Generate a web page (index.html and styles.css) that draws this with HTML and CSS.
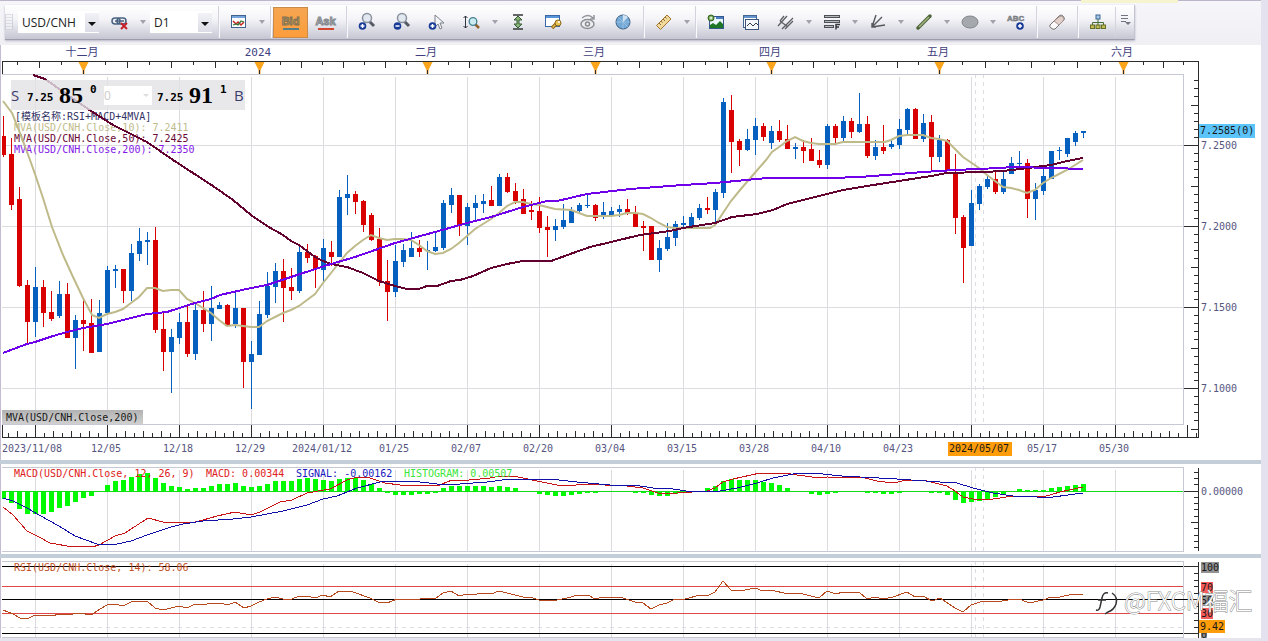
FILE: index.html
```html
<!DOCTYPE html>
<html lang="zh-CN">
<head>
<meta charset="utf-8">
<meta name="viewport" content="width=device-width, initial-scale=1">
<title>USD/CNH D1</title>
<link rel="stylesheet" href="styles.css">
</head>
<body>
<div class="frame">
  <header class="header">
    <div class="tab-hint"></div>
    <div class="toolbar" role="toolbar" aria-label="图表工具">
      <span class="grip"></span>
      <span class="combo combo-symbol"><select aria-label="品种"><option>USD/CNH</option></select></span>
      <button class="tool" aria-label="取消链接"><svg width="20" height="20" viewBox="0 0 20 20"><g fill="none" stroke="#47617f" stroke-width="1.5"><rect x="2" y="6" width="8" height="6" rx="3"/><rect x="7" y="6" width="9" height="6" rx="3"/><path d="M5 9h9"/></g><path d="M11 11l6 6M17 11l-6 6" stroke="#c8202a" stroke-width="2"/></svg></button>
      <button class="drop" aria-label="更多链接"></button>
      <span class="combo combo-period"><select aria-label="周期"><option>D1</option></select></span>
      <span class="sep"></span>
      <button class="tool" aria-label="图表类型"><svg width="20" height="20" viewBox="0 0 20 20"><rect x="2.500" y="3.500" width="14" height="12" fill="#fff" stroke="#41618f"/><path d="M3 5h13" stroke="#75a5dc" stroke-width="2"/><path d="M4 9l3 3 2-2 3 3 3-3" fill="none" stroke="#c22" stroke-width="1.500"/><path d="M4 13l3-1 2 1 3-4 3 1" fill="none" stroke="#357b38" stroke-width="1.300"/></svg></button>
      <button class="drop" aria-label="更多图表类型"></button>
      <span class="sep"></span>
      <button class="tool price bid" aria-pressed="true">Bid</button>
      <button class="tool price ask">Ask</button>
      <span class="sep"></span>
      <button class="tool" aria-label="放大"><svg width="20" height="20" viewBox="0 0 20 20"><path d="M12 9l5 5" stroke="#555b64" stroke-width="3"/><circle cx="10" cy="6" r="4.500" fill="#e2e8ef" stroke="#8a929e" stroke-width="1.500"/><circle cx="5.500" cy="14" r="3.800" fill="#173b96"/><path d="M3.500 14h4M5.500 12v4" stroke="#fff" stroke-width="1.500"/></svg></button>
      <button class="tool" aria-label="缩小"><svg width="20" height="20" viewBox="0 0 20 20"><path d="M12 9l5 5" stroke="#555b64" stroke-width="3"/><circle cx="10" cy="6" r="4.500" fill="#e2e8ef" stroke="#8a929e" stroke-width="1.500"/><circle cx="5.500" cy="14" r="3.800" fill="#173b96"/><path d="M3.500 14h4" stroke="#fff" stroke-width="1.500"/></svg></button>
      <button class="tool" aria-label="选择"><svg width="20" height="20" viewBox="0 0 20 20"><path d="M8 3v12l3-3 2 5 2-1-2-5h4z" fill="#f4f4f7" stroke="#7c818b"/><circle cx="5.500" cy="14" r="3.800" fill="#173b96"/><path d="M3.500 14h4M5.500 12v4" stroke="#fff" stroke-width="1.500"/></svg></button>
      <button class="tool" aria-label="垂直缩放"><svg width="20" height="20" viewBox="0 0 20 20"><path d="M3.500 4v12M1.500 6l2-2 2 2M1.500 14l2 2 2-2" fill="none" stroke="#30363e"/><path d="M13 12l4 4" stroke="#93622c" stroke-width="2.500"/><circle cx="11" cy="9.500" r="3.800" fill="#ccecf2" stroke="#418091" stroke-width="1.300"/></svg></button>
      <button class="drop" aria-label="更多缩放"></button>
      <button class="tool" aria-label="适应高度"><svg width="20" height="20" viewBox="0 0 20 20"><path d="M5 3h10M5 17h10" stroke="#333a36" stroke-width="1.500"/><path d="M10 4l4 4h-3v4h3l-4 4-4-4h3V8H6z" fill="#86b378" stroke="#385c35"/></svg></button>
      <button class="tool" aria-label="图表属性"><svg width="20" height="20" viewBox="0 0 20 20"><rect x="2.500" y="3.500" width="14" height="11" fill="#fff" stroke="#3b67a8"/><path d="M3 5h13" stroke="#5794da" stroke-width="2"/><path d="M9 16l5-5" stroke="#8a6719" stroke-width="3.500"/><path d="M9.500 15.500l4-4" stroke="#e4b94b" stroke-width="1.500"/><circle cx="15" cy="11" r="3" fill="#e8c257" stroke="#8a6719"/><circle cx="16" cy="10" r="1" fill="#fff"/></svg></button>
      <button class="tool" aria-label="显示隐藏"><svg width="20" height="20" viewBox="0 0 20 20"><path d="M4 6q6-5 11 0M16 3v4h-4" fill="none" stroke="#91959b" stroke-width="1.500"/><ellipse cx="9.500" cy="12" rx="6.500" ry="4.500" fill="#eee" stroke="#8d9197" stroke-width="1.500"/><circle cx="9.500" cy="12" r="2" fill="none" stroke="#888d94" stroke-width="1.500"/></svg></button>
      <button class="tool" aria-label="市场"><svg width="20" height="20" viewBox="0 0 20 20"><circle cx="10" cy="10" r="7" fill="#75a9d5" stroke="#365b83"/><path d="M10 3v14M3 10h14M5 5l10 10M10 10L15 5" stroke="#a0c6e8" stroke-width=".7"/><path d="M10 10V3a7 7 0 015 2z" fill="#d0e2f1"/></svg></button>
      <span class="sep"></span>
      <button class="tool" aria-label="测量"><svg width="20" height="20" viewBox="0 0 20 20"><path d="M2.500 13.500L13 3l4 4L6.500 17.500z" fill="#f1d99b" stroke="#a2762c"/><path d="M5 11l2 2M7 9l1.500 1.500M9 7l2 2M11 5l1.500 1.500" stroke="#8e692c"/></svg></button>
      <button class="drop" aria-label="更多测量"></button>
      <span class="sep"></span>
      <button class="tool" aria-label="添加指标"><svg width="20" height="20" viewBox="0 0 20 20"><rect x="3.500" y="4.500" width="14" height="12" fill="#ecf4fc" stroke="#33568b"/><path d="M10 6h7" stroke="#4c7ec3" stroke-width="2"/><path d="M4 16v-3l3-2 3 2 4-4 3 3v4z" fill="#1d7625"/><circle cx="5" cy="6" r="3" fill="#66a046" stroke="#356121"/><path d="M3.500 6h3M5 4.500v3" stroke="#fff"/></svg></button>
      <button class="tool" aria-label="编辑指标"><svg width="20" height="20" viewBox="0 0 20 20"><rect x="2.500" y="3.500" width="13" height="12" fill="#fff" stroke="#456693"/><path d="M3 5h12" stroke="#6394cd" stroke-width="2"/><rect x="4.500" y="7.500" width="13" height="10" fill="#f5f8fc" stroke="#3a5579"/><path d="M6 14l3-3 3 3 3-3 2 2" fill="none" stroke="#333c46"/></svg></button>
      <button class="tool" aria-label="音叉线"><svg width="20" height="20" viewBox="0 0 20 20"><path d="M2 14l9-10M6 17L17 6M9 17l8-8M4 9l8 6M4 9l4-5" fill="none" stroke="#5c6064" stroke-width="1.300"/></svg></button>
      <button class="drop" aria-label="更多音叉线"></button>
      <button class="tool" aria-label="斐波那契"><svg width="20" height="20" viewBox="0 0 20 20"><path d="M2 4.500h16M2 9.500h16M2 14.500h10" stroke="#4d5156" stroke-width="3"/><path d="M3 4.500h14M3 9.500h14M3 14.500h8" stroke="#b5b8ba"/><path d="M14 17.500v-5h4M14 15h3" fill="none" stroke="#34383c" stroke-width="1.500"/></svg></button>
      <button class="drop" aria-label="更多斐波那契"></button>
      <button class="tool" aria-label="扇形线"><svg width="20" height="20" viewBox="0 0 20 20"><path d="M4 15L8 3M4 15L14 5M4 15l13-2M4 11v4h4" fill="none" stroke="#55595e" stroke-width="1.400"/></svg></button>
      <button class="drop" aria-label="更多扇形线"></button>
      <button class="tool" aria-label="趋势线"><svg width="20" height="20" viewBox="0 0 20 20"><path d="M4 16L16 4" stroke="#50643a" stroke-width="3.500" stroke-linecap="round"/><path d="M5 15L15 5" stroke="#a1b581" stroke-width="1.500"/></svg></button>
      <button class="drop" aria-label="更多趋势线"></button>
      <button class="tool" aria-label="椭圆"><svg width="20" height="20" viewBox="0 0 20 20"><ellipse cx="10" cy="10" rx="8" ry="6" fill="#a5a9ae" stroke="#81868c"/></svg></button>
      <button class="drop" aria-label="更多形状"></button>
      <button class="tool" aria-label="文字标签"><svg width="20" height="20" viewBox="0 0 20 20"><text class="abc" x="1" y="9">ABC</text><circle cx="14" cy="14" r="3.800" fill="#173b96"/><path d="M12 14h4M14 12v4" stroke="#fff" stroke-width="1.500"/></svg></button>
      <span class="sep"></span>
      <button class="tool" aria-label="橡皮擦"><svg width="20" height="20" viewBox="0 0 20 20"><path d="M3 13L12 4q2-2 4 0t1 4l-9 9q-2 1-4-1t-1-3z" fill="#fafafa" stroke="#77716f"/><path d="M7 9l5 4 4-4q2-2 0-4t-4 0z" fill="#e2d0cb" stroke="#97837e" stroke-width=".8"/></svg></button>
      <span class="sep"></span>
      <button class="tool" aria-label="对象树"><svg width="20" height="20" viewBox="0 0 20 20"><path d="M10 7v4M4.500 13v-2.500h11V13M10 11v2" fill="none" stroke="#446e31"/><rect x="8" y="3" width="4" height="4" fill="#a9cbea" stroke="#3c6591"/><g fill="#c5bb53" stroke="#637127"><rect x="2.500" y="13" width="4" height="3.500"/><rect x="8" y="13" width="4" height="3.500"/><rect x="13.500" y="13" width="4" height="3.500"/></g></svg></button>
      <button class="overflow" aria-label="工具栏选项"><svg width="12" height="14" viewBox="0 0 12 14"><path d="M1 2.500h7M1 5.500h7M1 8.500h5" stroke="#71757f"/><path d="M5 9h6l-3 3z" fill="#71757f"/></svg></button>
    </div>
  </header>

  <main class="charts">
    <section class="pane" aria-label="价格图">
      <svg class="plot" viewBox="0 45 1261 415">
        <g id="price-grid"></g>
        <g class="month">
          <text x="82" y="56">十二月</text><text x="258" y="56">2024</text><text x="426" y="56">二月</text><text x="594" y="56">三月</text><text x="770" y="56">四月</text><text x="938" y="56">五月</text><text x="1122" y="56">六月</text>
        </g>
        <g id="rulers"></g>
        <g class="legend">
          <text class="c-title" x="15" y="120">[模板名称:RSI+MACD+4MVA]</text>
          <text class="c-fast" x="14" y="131">MVA(USD/CNH.Close,10): 7.2411</text>
          <text class="c-mid" x="14" y="142">MVA(USD/CNH.Close,50): 7.2425</text>
          <text class="c-slow" x="14" y="153">MVA(USD/CNH.Close,200): 7.2350</text>
        </g>
        <g id="candles"></g>
        <g id="averages"></g>
        <linearGradient id="tagfill" x1="0" x2="0" y1="0" y2="1"><stop offset="0" stop-color="#b2b2b2"/><stop offset="1" stop-color="#d0d0d0"/></linearGradient>
        <rect x="2" y="410" width="141" height="14" fill="url(#tagfill)"/>
        <text class="c-black" x="6" y="421">MVA(USD/CNH.Close,200)</text>
        <g class="date">
          <text x="32" y="452">2023/11/08</text><text x="106" y="452">12/05</text><text x="178" y="452">12/18</text><text x="250" y="452">12/29</text><text x="322" y="452">2024/01/12</text><text x="394" y="452">01/25</text><text x="466" y="452">02/07</text><text x="538" y="452">02/20</text><text x="610" y="452">03/04</text><text x="682" y="452">03/15</text><text x="754" y="452">03/28</text><text x="826" y="452">04/10</text><text x="898" y="452">04/23</text><text x="1042" y="452">05/17</text><text x="1114" y="452">05/30</text>
          <rect x="948" y="442" width="64" height="14" fill="#ff9c0a"/>
          <text class="c-black" x="979" y="452">2024/05/07</text>
        </g>
        <rect x="1199" y="124" width="56" height="14" fill="#5bc4fa"/>
        <g class="scale">
          <text class="c-black" x="1200" y="134">7.2585(0)</text>
          <text x="1201" y="149">7.2500</text><text x="1201" y="230">7.2000</text><text x="1201" y="311">7.1500</text><text x="1201" y="392">7.1000</text>
        </g>
      </svg>
      <form class="quote">
        <button type="button" class="side sell">S</button>
        <span class="small">7.25</span><span class="big">85</span><sup>0</sup>
        <span class="amount"><select aria-label="数量" disabled><option>0</option></select></span>
        <span class="small">7.25</span><span class="big">91</span><sup>1</sup>
        <button type="button" class="side">B</button>
      </form>
    </section>
    <div class="splitter"></div>
    <section class="pane" aria-label="MACD">
      <svg class="plot" viewBox="0 464 1261 90">
        <g id="macd"></g>
        <g class="legend">
          <text class="c-red" x="14" y="477">MACD(USD/CNH.Close, 12, 26, 9)</text>
          <text class="c-red" x="206" y="477">MACD: 0.00344</text>
          <text class="c-blue" x="296" y="477">SIGNAL: -0.00162</text>
          <text class="c-green" x="404" y="477">HISTOGRAM: 0.00507</text>
        </g>
        <text class="scale" x="1201" y="495">0.00000</text>
      </svg>
    </section>
    <div class="splitter"></div>
    <section class="pane" aria-label="RSI">
      <svg class="plot" viewBox="0 558 1261 80">
        <g id="rsi"></g>
        <text class="c-rsi" x="14" y="571">RSI(USD/CNH.Close, 14): 58.06</text>
        <g class="level">
          <rect x="1201" y="562" width="18" height="11" fill="#929292"/><text x="1201" y="571">100</text>
          <rect x="1201" y="582" width="12" height="11" fill="#f45b5b"/><text x="1201" y="591">70</text>
          <rect x="1201" y="595" width="12" height="11" fill="#929292"/><text x="1201" y="604">50</text>
          <rect x="1201" y="608" width="12" height="11" fill="#f45b5b"/><text x="1201" y="617">30</text>
          <rect x="1201" y="629" width="6" height="9" fill="#929292"/><text x="1201" y="638">0</text>
          <rect x="1199" y="620" width="26" height="13" fill="#ff9c0a"/><text x="1200" y="630">9.42</text>
        </g>
        <g class="brand">
          <path d="M1108 593q-5-1-6 5l-2 9q-1 4-4 3M1098 600h8M1112 593q6 4 4 11-2 6-8 8l-3 2"/>
          <text x="1124" y="610">@FXCM福汇</text>
        </g>
      </svg>
    </section>
  </main>
</div>
<script src="chart.js"></script>
</body>
</html>
```
FILE: styles.css
```css
* { box-sizing: border-box; }
body { margin: 0; background: #e4e2ef; font-family: "Open Sans", "Noto Sans CJK SC", sans-serif; font-size: 12px; }
button, select { font: inherit; color: inherit; margin: 0; }

.frame { min-height: 100vh; border-right: 7px solid #e4e2ef; background: #e6e4ec; }
.header { height: 45px; padding: 4px 4px 0 5px; border-top: 1px solid #bdb6ca; background: linear-gradient(#f6f5fa, #efeff4); position: relative; }
.tab-hint { position: absolute; top: -1px; right: 83px; width: 97px; height: 3px; background: #f6f3cf; }

.toolbar { display: flex; align-items: center; width: max-content; height: 35px; border-bottom: 1px solid #9c9cac; border-right: 1px solid #c4c4d0; background: linear-gradient(#fff, #f5f5f9 40%, #c6c6d3); box-shadow: 0 1px 2px #b8b8c6; }
.grip { width: 8px; height: 16px; margin-right: 5px; border-left: 1px solid #c2c2d0; border-right: 1px solid #c2c2d0; background: repeating-linear-gradient(#d0d0da 0 1px, #f5f5f8 1px 3px); opacity: .6; }
.combo { display: flex; position: relative; height: 22px; background: #fff; }
.combo-symbol { width: 81px; margin-right: 3px; }
.combo-period { width: 62px; margin: 0 3px 0 2px; }
.combo select { width: 100%; padding: 0 14px 0 4px; border: 0; background: none; appearance: none; color: #222; }
.combo::after { content: ""; position: absolute; right: 0; top: 2px; width: 14px; height: 19px; pointer-events: none; background: linear-gradient(#f1f1f6, #dcdce6); }
.combo::before { content: ""; position: absolute; z-index: 1; right: 3px; top: 11px; border: 4px solid transparent; border-top: 4px solid #111; border-bottom: 0; pointer-events: none; }
.tool { display: grid; place-items: center; flex: none; width: 35px; height: 31px; padding: 0; border: 0; background: none; }
.drop { flex: none; width: 11px; height: 31px; padding: 0; border: 0; background: none; }
.drop::before { content: ""; display: block; width: 0; margin: 0 auto; border: 3px solid transparent; border-top: 4px solid #a2a2ac; border-bottom: 0; }
.sep { flex: none; width: 1px; height: 32px; margin: 0 2px 0 3px; background: #d3d3dd; box-shadow: 1px 0 #fafafc; }
.price { align-content: center; font: bold 11px/12px "Liberation Sans", Arial, sans-serif; color: #c4c5c9; -webkit-text-stroke: 1px #85898e; }
.price::after { content: ""; width: 16px; height: 2px; margin-top: 1px; background: #d3472e; }
.bid { border: 1px solid #c98a4a; background: linear-gradient(#f5a552, #fd9d3c); color: #c9a878; -webkit-text-stroke: 1px #83714f; }
.bid::after { background: #557e86; }
.abc { font: bold 8px "Liberation Sans", Arial, sans-serif; fill: #a3a6aa; stroke: #686c70; stroke-width: .5px; }
.overflow { width: 19px; height: 31px; padding: 0 0 0 2px; border: 0; border-left: 1px solid #d3d3dd; background: none; }

.pane { position: relative; background: #fff; border-left: 1px solid #c4bcd0; }
.plot { display: block; width: calc(100% + 1px); margin-left: -1px; height: auto; font-family: "DejaVu Sans Mono", "Noto Sans CJK SC", monospace; font-size: 10px; }
.plot text { white-space: pre; }
.splitter { height: 4px; background: #c4ced9; }

.month { font-size: 11px; fill: #3f3f80; }
.month text, .date text { text-anchor: middle; }
.date, .scale { fill: #55557f; }
.c-title { fill: #333366; }
.c-fast { fill: #c0bc8c; }
.c-mid { fill: #6a0835; }
.c-slow { fill: #8418e8; }
.c-red { fill: #e02020; }
.c-blue { fill: #1818c0; }
.c-green { fill: #3ae63a; }
.c-rsi { fill: #c25428; }
.c-black, .level { fill: #181818; }

.grid-line { stroke: #dcdce0; }
.dash-line { stroke: #dcdce2; stroke-dasharray: 4 4; }
.box-line { stroke: #c6c9d3; fill: none; }
.ruler-line { stroke: #2c2c2c; fill: none; }
.marker { fill: #fba41c; }
.up { fill: #0560bf; }
.down { fill: #d80000; }
.hist { fill: #00fa00; }
.line { fill: none; stroke-width: 2px; }
.thin { stroke-width: 1px; }
.line-fast { stroke: #bfba8a; }
.line-mid { stroke: #620030; }
.line-slow { stroke: #7000ea; }
.line-macd { stroke: #c81414; }
.line-signal { stroke: #1010a8; }
.line-rsi { stroke: #b8491c; }
.level-black { stroke: #000; }
.level-red { stroke: #e04848; }
.level-zero { stroke: #14dc14; }
.brand text { font: 300 24px "Noto Sans CJK SC", sans-serif; fill: #fff; stroke: #8a8a8a; stroke-width: 1px; paint-order: stroke; }
.brand path { fill: none; stroke: #333; stroke-width: 1.5px; }

.quote { position: absolute; left: 10px; top: 35px; display: flex; align-items: center; width: 234px; height: 30px; margin: 0; background: rgba(226, 226, 230, .8); color: #000; }
.quote > * { flex: none; }
.side { width: 11px; padding: 0; border: 0; background: none; font: 15px/30px "Open Sans", sans-serif; color: #3c3c6c; text-align: left; }
.sell { width: 16px; }
.small { width: 32px; padding-top: 6px; font: bold 11px/14px "DejaVu Sans Mono", monospace; }
.big { width: 31px; font: bold 24px/30px "Liberation Serif", serif; }
.quote sup { width: 14px; padding-bottom: 10px; font: bold 11px/12px "DejaVu Sans Mono", monospace; }
.amount { display: flex; position: relative; width: 48px; height: 19px; margin-right: 5px; background: #fff; }
.amount::after { content: ""; position: absolute; right: 3px; top: 8px; border: 3px solid transparent; border-top-color: #ddd; border-bottom: 0; }
.amount select { width: 100%; padding: 0; border: 0; appearance: none; background: none; color: #ccc; opacity: 1; }
```
FILE: chart.js
```javascript
const NS = "http://www.w3.org/2000/svg";
const LEFT = 2, RIGHT = 1183, AXIS = 1198, STEP = 8;

function add(parent, tag, attrs) {
  const el = document.createElementNS(NS, tag);
  for (const key in attrs) el.setAttribute(key, attrs[key]);
  parent.appendChild(el);
  return el;
}
function line(parent, x1, y1, x2, y2, cls) {
  const vertical = x1 === x2;
  add(parent, "path", {
    d: vertical ? `M${x1 + .5} ${y1}V${y2}` : `M${x1} ${y1 + .5}H${x2}`,
    class: cls, "shape-rendering": "crispEdges"
  });
}
function curve(parent, points, cls, smooth) {
  add(parent, "polyline", {
    points, class: "line " + cls,
    "shape-rendering": smooth ? "auto" : "crispEdges"
  });
}
function columns(parent, top, bottom) {
  for (let x = 35; x < RIGHT; x += 72) line(parent, x, top + 3, x, bottom, "grid-line");
  line(parent, 975, top, 975, bottom, "dash-line");
  line(parent, 983, top, 983, bottom, "dash-line");
  line(parent, LEFT, top, RIGHT + 1, top, "box-line");
  line(parent, LEFT, bottom, RIGHT + 1, bottom, "box-line");
  line(parent, RIGHT, top, RIGHT, bottom, "box-line");
}

/* Direction, high, body top, body bottom, low */
const candles = `d116 136 155 157,d138 154 205 210,d187 199 286 287,d280 285 322 343,u267 287 322 337,d280 287 313 327,d291 312 319 321,u281 294 316 318,d283 294 338 338,u315 320 338 369,d300 320 324 351,d299 323 353 353,u300 313 352 352,u266 270 313 315,u265 269 271 288,d269 269 291 303,u244 253 291 301,u228 241 254 261,u232 240 242 265,d227 240 330 333,d312 329 352 371,u329 337 352 393,u313 322 338 344,d304 322 354 357,u304 310 354 360,d291 310 324 332,u286 308 324 341,u302 305 309 309,d304 305 326 326,u292 308 324 328,d308 308 362 388,u341 354 362 409,u301 314 355 355,u272 286 315 318,u263 271 287 303,d259 271 288 322,d268 287 291 300,u246 252 291 293,d244 252 258 263,d255 256 269 288,u239 248 270 282,d241 252 257 266,u190 197 257 257,u175 194 198 215,d191 194 202 214,d200 201 225 232,d213 215 240 241,d228 239 282 286,d260 281 292 321,u245 261 292 297,u244 250 262 267,u232 248 257 257,d240 248 252 257,u241 250 251 270,u233 247 251 252,u200 203 248 250,u188 195 205 213,d195 195 226 236,u203 207 226 245,u195 203 208 222,u194 201 204 213,d186 200 206 206,u174 177 206 206,d173 177 192 193,d183 191 201 204,d189 199 214 214,d201 210 212 220,d197 211 228 233,d216 227 230 257,u219 226 230 241,u204 220 227 229,u207 211 223 223,u203 205 211 212,u194 205 206 208,d204 205 218 221,u202 212 217 219,u207 211 216 216,u205 209 212 217,d199 209 213 215,d206 214 227 227,d221 226 228 251,d226 226 260 260,u240 248 260 272,u223 237 249 251,u221 224 238 246,u216 223 225 227,u213 217 226 226,u204 208 218 220,d197 208 210 214,u189 192 210 222,u98 102 193 198,d95 110 142 173,d139 141 150 166,u129 139 150 151,u118 126 140 155,d123 126 137 141,u126 131 143 149,d120 131 140 142,d125 139 149 149,u143 147 149 159,d140 147 151 163,d138 149 161 161,d150 160 165 168,u124 126 165 169,d124 126 138 145,u116 121 138 142,d118 121 132 138,u93 124 132 133,d116 124 156 158,u140 147 156 160,d125 147 151 154,u139 144 147 149,u119 129 145 149,u108 109 130 135,d108 109 139 139,u114 123 139 142,d115 122 157 170,u135 140 157 162,d139 140 171 171,d154 174 218 234,d215 217 248 283,u190 203 246 246,u184 186 204 210,u176 179 187 189,d172 179 192 194,u172 179 192 194,u157 163 174 174,u151 163 164 170,d159 163 199 218,u183 190 199 220,u168 176 191 195,u151 151 179 179,u147 150 151 160,u138 138 154 157,u131 133 142 146,u131 131 133 138`.split(",");

const fast = "3,101 12,113 20,133 30,160 35,174 43,198 52,227 63,255 73,277 83,298 92,315 99,318 107,314 115,312 123,309 131,303 139,297 147,288 155,288 163,291 171,290 179,290 187,299 195,303 203,308 211,313 219,320 227,326 235,325 243,326 251,327 259,327 267,321 275,317 283,313 291,310 299,306 307,300 315,294 323,283 331,273 339,263 347,253 355,246 363,240 371,235 379,238 387,240 395,239 403,239 411,240 419,245 427,251 435,254 443,253 451,249 459,243 467,236 475,229 483,224 491,219 499,213 507,206 515,202 523,202 531,204 539,205 547,207 555,209 571,210 579,213 587,216 611,216 619,215 627,213 635,213 643,214 651,218 659,223 667,227 675,228 710,228 715,225 723,213 731,201 740,190 753,175 766,160 772,152 779,147 787,141 795,137 803,141 811,143 819,144 835,144 843,142 885,142 891,140 899,136 907,135 923,135 931,138 939,139 947,141 955,149 963,157 979,168 987,175 995,181 1003,187 1011,188 1019,190 1027,193 1035,190 1043,183 1051,178 1059,174 1067,170 1075,165 1083,160";
const mid = "33,75 45,79 88,109 113,125 147,142 173,160 193,173 213,186 233,200 251,215 267,226 283,235 291,241 299,245 307,251 315,257 323,261 331,264 347,267 363,273 379,281 395,286 407,289 419,289 427,286 437,286 451,281 460,280 473,276 491,268 507,264 523,261 551,261 573,253 590,247 611,242 640,235 670,231 683,228 715,223 732,217 757,214 773,210 787,204 827,194 843,190 867,186 899,181 931,176 947,173 983,172 1003,171 1020,169 1051,165 1067,161 1083,158";
const slow = "3,353 27,344 35,342 53,336 67,332 83,328 107,324 147,314 167,312 195,303 211,299 220,295 251,288 267,285 300,274 331,264 355,257 395,243 435,232 467,223 491,217 523,207 547,201 557,201 587,194 630,189 683,185 715,183 767,178 830,178 860,177 899,174 923,172 955,170 1000,168 1013,167 1053,168 1083,169";

const histogram = [-7,-11,-17,-22,-22,-22,-20,-16,-14,-10,-6,-4,0,6,10,11,14,17,18,13,8,5,4,2,3,3,5,7,7,8,5,4,5,7,10,10,10,12,13,12,11,10,12,13,13,11,7,3,-1,-3,-3,-3,-2,-2,-1,3,5,5,5,5,5,4,5,4,3,0,0,-2,-3,-4,-4,-3,-2,-1,-1,0,0,0,0,-1,-1,-3,-4,-4,-2,0,0,0,3,5,10,12,11,11,11,9,8,6,3,0,0,-2,-3,-2,-1,0,0,0,-1,-1,-2,-2,-1,0,0,0,-1,-1,-3,-8,-11,-10,-9,-7,-5,-3,0,2,1,1,1,3,4,5,6,7];
const macd = "3,507 13,515 27,531 39,537 50,543 73,547 83,546 92,547 99,545 115,536 125,533 148,518 163,522 171,523 195,522 203,520 217,516 235,512 251,515 260,512 280,502 292,500 307,493 330,489 347,480 357,477 370,478 385,483 400,485 420,485 437,486 452,480 459,481 490,478 500,476 518,477 537,481 557,485 570,486 583,484 627,486 643,488 658,493 677,493 707,491 715,488 723,482 733,479 760,473 785,473 797,475 820,478 827,477 865,478 877,481 893,483 907,480 927,481 947,486 955,491 963,497 973,499 993,499 1013,496 1043,497 1060,492 1083,487";
const signal = "3,498 13,501 27,508 39,515 59,526 75,536 97,544 117,544 131,541 147,535 171,527 183,524 203,521 233,519 251,517 283,511 307,505 323,499 337,496 357,488 380,482 393,481 420,482 437,484 460,484 487,482 510,479 550,479 577,482 610,485 640,486 653,488 673,489 693,492 720,491 737,488 757,483 773,478 793,474 813,473 842,476 897,479 940,482 957,483 973,488 993,493 1013,496 1037,497 1053,497 1083,493";
const rsi = "3,610 13,614 20,618 27,619 35,615 51,616 60,614 67,615 80,613 91,615 100,609 107,605 115,604 123,606 131,602 138,601 147,601 155,608 163,610 179,606 187,608 195,604 203,605 211,603 220,603 228,605 235,602 244,608 251,606 259,602 267,599 275,597 283,599 292,599 299,596 307,596 315,598 323,595 330,597 339,591 353,592 370,598 378,602 387,603 397,599 420,599 436,598 443,593 451,591 459,596 467,594 477,594 483,593 491,594 499,591 523,597 533,598 539,600 557,600 567,598 578,595 588,595 595,599 603,597 623,598 635,602 643,603 651,609 659,605 667,603 675,599 685,599 700,595 707,596 715,592 723,581 731,590 740,591 755,588 763,591 771,590 788,594 795,593 803,594 819,598 827,591 836,594 843,592 853,593 859,592 867,599 875,597 883,599 893,597 907,592 915,597 923,596 932,601 940,598 955,608 963,612 971,605 983,601 997,602 1013,599 1022,600 1029,603 1043,600 1051,597 1060,597 1073,594 1083,594";

/* Price pane */
const grid = document.getElementById("price-grid");
for (const y of [145, 226, 307, 388]) line(grid, LEFT, y, RIGHT, y, "grid-line");
columns(grid, 74, 424);

const rulers = document.getElementById("rulers");
line(rulers, LEFT, 61, AXIS + 1, 61, "ruler-line");
line(rulers, LEFT, 61, LEFT, 74, "ruler-line");
const months = [83, 259, 427, 595, 771, 939, 1123];
for (const x of [17, 39, 61]) line(rulers, x, 61, x, x === 39 ? 68 : 65, "ruler-line");
months.forEach((start, i) => {
  const gap = i < 6 ? (months[i + 1] - start) / 8 : 20;
  for (let k = 1; k < (i < 6 ? 8 : 4); k++) {
    const x = start + gap * k;
    line(rulers, x, 61, x, k % 2 ? 65 : 68, "ruler-line");
  }
  add(rulers, "path", { d: `M${start - 4.5} 62h10l-4 8v4h-2v-4z`, class: "marker" });
  line(rulers, start, 70, start, 74, "ruler-line");
});
line(rulers, AXIS, 61, AXIS, 437, "ruler-line");
for (let k = -8; k <= 35; k++) {
  const y = Math.round(145 + k * 8.1);
  const size = k % 10 === 0 ? 14 : k % 5 === 0 ? 7 : 4;
  line(rulers, AXIS - size, y, AXIS, y, "ruler-line");
}
line(rulers, LEFT, 437, AXIS + 1, 437, "ruler-line");
line(rulers, LEFT, 425, LEFT, 437, "ruler-line");
for (let k = -3; k <= 129; k++) {
  const x = 35 + k * 9;
  if (x > AXIS) break;
  const size = k % 8 === 0 ? 12 : k % 2 === 0 ? 6 : 4;
  line(rulers, x, 437 - size, x, 437, "ruler-line");
}

const bodies = document.getElementById("candles");
candles.forEach((entry, i) => {
  const [high, top, bottom, low] = entry.slice(1).split(" ").map(Number);
  const cls = entry[0] === "u" ? "up" : "down";
  const x = 3 + i * STEP;
  const left = Math.max(LEFT, x - 2);
  add(bodies, "rect", { x, y: high, width: 1, height: low - high || 1, class: cls });
  add(bodies, "rect", { x: left, y: top, width: x + 3 - left, height: bottom - top, class: cls });
});

const averages = document.getElementById("averages");
curve(averages, fast, "line-fast", true);
curve(averages, mid, "line-mid");
curve(averages, slow, "line-slow");

/* MACD pane */
const macdPane = document.getElementById("macd");
columns(macdPane, 467, 551);
histogram.forEach((v, i) => {
  if (!v) return;
  const x = Math.max(LEFT, 1 + i * STEP);
  add(macdPane, "rect", { x, y: v > 0 ? 491 - v : 491, width: 6 + i * STEP - x, height: Math.abs(v) + 1, class: "hist" });
});
line(macdPane, LEFT, 491, RIGHT, 491, "level-zero");
curve(macdPane, macd, "line-macd thin");
curve(macdPane, signal, "line-signal thin");
line(macdPane, AXIS, 468, AXIS, 551, "ruler-line");
[472, 478, 484, 491, 497, 503, 509, 516, 522, 528, 535, 541, 547].forEach(y => {
  line(macdPane, AXIS - (y === 491 ? 14 : y === 522 ? 7 : 4), y, AXIS, y, "ruler-line");
});

/* RSI pane */
const rsiPane = document.getElementById("rsi");
columns(rsiPane, 561, 637);
line(rsiPane, LEFT, 627, RIGHT, 627, "dash-line");
for (const y of [566, 599, 633]) line(rsiPane, LEFT, y, y === 599 ? AXIS : RIGHT, y, "level-black");
for (const y of [586, 613]) line(rsiPane, LEFT, y, RIGHT, y, "level-red");
curve(rsiPane, rsi, "line-rsi thin");
line(rsiPane, AXIS, 562, AXIS, 638, "ruler-line");
[566, 573, 580, 586, 593, 599, 606, 613, 620, 627, 633].forEach(y => {
  line(rsiPane, AXIS - (y === 566 || y === 633 ? 14 : 4), y, AXIS, y, "ruler-line");
});
```
